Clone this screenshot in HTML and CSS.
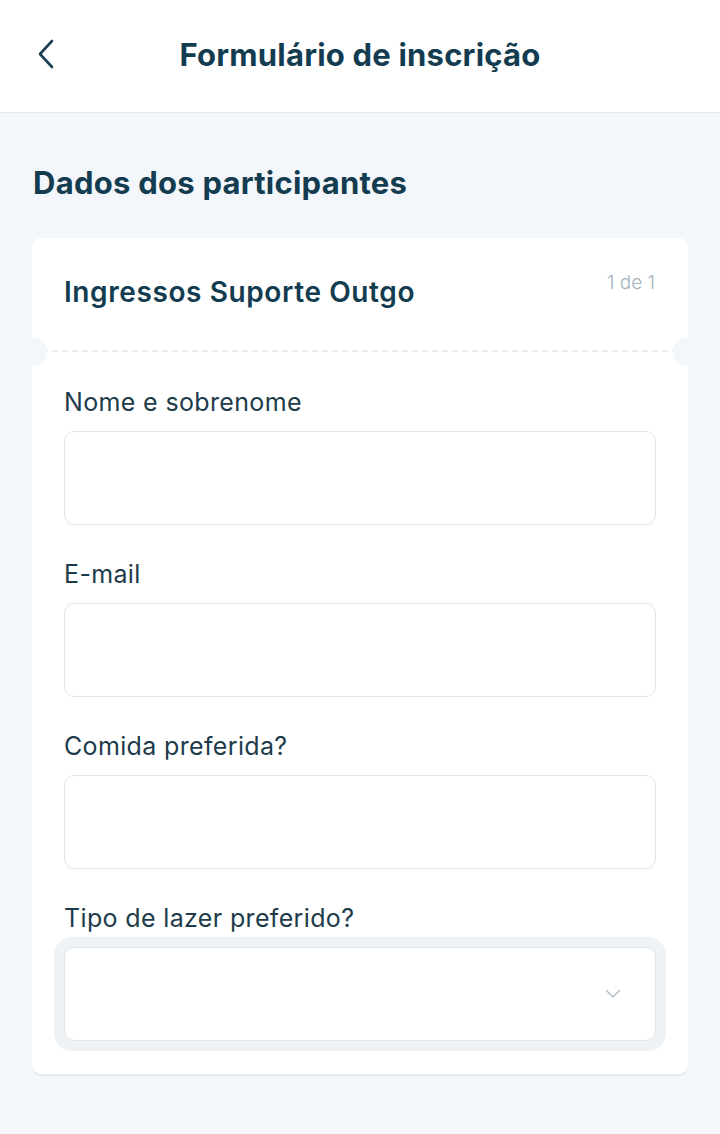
FILE: index.html
```html
<!DOCTYPE html>
<html lang="pt">
<head>
<meta charset="utf-8">
<title>Formulário de inscrição</title>
<link rel="stylesheet" href="styles.css">
</head>
<body>
<header class="topbar">
  <button class="back" aria-label="Voltar">
    <svg width="20" height="30" viewBox="0 0 20 30"><path d="M16 2 L4 15 L16 28" fill="none" stroke="#1a3f52" stroke-width="2.6" stroke-linecap="round" stroke-linejoin="round"/></svg>
  </button>
  <h1 class="topbar-title">Formulário de inscrição</h1>
</header>
<main class="content">
  <h2 class="section-title">Dados dos participantes</h2>
  <section class="card">
    <div class="card-head">
      <h3 class="ticket-name">Ingressos Suporte Outgo</h3>
      <span class="counter">1 de 1</span>
    </div>
    <div class="card-body">
      <div class="field">
        <label class="label">Nome e sobrenome</label>
        <div class="input"></div>
      </div>
      <div class="field">
        <label class="label">E-mail</label>
        <div class="input"></div>
      </div>
      <div class="field">
        <label class="label">Comida preferida?</label>
        <div class="input"></div>
      </div>
      <div class="field">
        <label class="label">Tipo de lazer preferido?</label>
        <div class="select-ring">
          <div class="input select">
            <svg class="chev" width="16" height="10" viewBox="0 0 16 10"><path d="M1.5 1.5 L8 8 L14.5 1.5" fill="none" stroke="#b5c1c8" stroke-width="1.5" stroke-linecap="round" stroke-linejoin="round"/></svg>
          </div>
        </div>
      </div>
    </div>
  </section>
</main>
</body>
</html>
```
FILE: styles.css
```css
* { box-sizing: border-box; }
html, body { margin: 0; padding: 0; }
body {
  background: #f3f7fb;
  font-family: "Inter", "Lato", sans-serif;
  color: #143d51;
  width: 720px;
  min-height: 1134px;
}
.topbar {
  height: 113px;
  background: #ffffff;
  border-bottom: 1px solid #e1e7ec;
  display: flex;
  align-items: center;
  justify-content: center;
  position: relative;
  padding-bottom: 3px;
}
.back {
  position: absolute;
  left: 34px;
  top: 38px;
  background: none;
  border: 0;
  padding: 0;
  width: 24px;
  height: 32px;
  display: flex;
  align-items: center;
  justify-content: center;
}
.topbar-title {
  margin: 0;
  font-size: 31px;
  font-weight: 700;
  letter-spacing: 0.2px;
  color: #133c50;
}
.content {
  padding: 51px 32px 60px;
}
.section-title {
  margin: 0 0 36px 1px;
  font-size: 31px;
  font-weight: 700;
  letter-spacing: 0.25px;
  line-height: 38px;
  color: #133c50;
}
.card {
  background: #ffffff;
  border-radius: 9px;
  box-shadow: 0 2px 0 #e3ebf0;
}
.card-head {
  position: relative;
  height: 114px;
  padding: 0 33px 0 32px;
  display: flex;
  justify-content: space-between;
  align-items: flex-start;
  background-image: linear-gradient(to right, #e8eef2 60%, transparent 60%);
  background-size: 10px 2px;
  background-repeat: repeat-x;
  background-position: 0 bottom;
}
.card-head::before,
.card-head::after {
  content: "";
  position: absolute;
  bottom: -15px;
  width: 30px;
  height: 30px;
  border-radius: 50%;
  background: #f3f7fb;
}
.card-head::before { left: -15px; }
.card-head::after { right: -15px; }
.ticket-name {
  margin: 36px 0 0;
  font-size: 28px;
  font-weight: 600;
  letter-spacing: 0.6px;
  line-height: 36px;
  color: #133c50;
}
.counter {
  margin-top: 33px;
  font-size: 19px;
  font-weight: 300;
  color: #a3b2ba;
}
.card-body {
  padding: 35px 32px 23px;
  display: flex;
  flex-direction: column;
  gap: 34px;
}
.field {
  display: flex;
  flex-direction: column;
  gap: 14px;
}
.label {
  font-size: 25px;
  font-weight: 400;
  letter-spacing: 0.35px;
  line-height: 30px;
  color: #1d3b4a;
}
.input {
  height: 94px;
  border: 1.5px solid #dfe6eb;
  border-radius: 10px;
  background: #ffffff;
}
.select-ring {
  margin: -10px -10px 0;
  padding: 10px;
  background: #eef2f4;
  border-radius: 18px;
}
.select {
  display: flex;
  align-items: center;
  justify-content: flex-end;
  padding-right: 34px;
}
.chev { display: block; }
```
